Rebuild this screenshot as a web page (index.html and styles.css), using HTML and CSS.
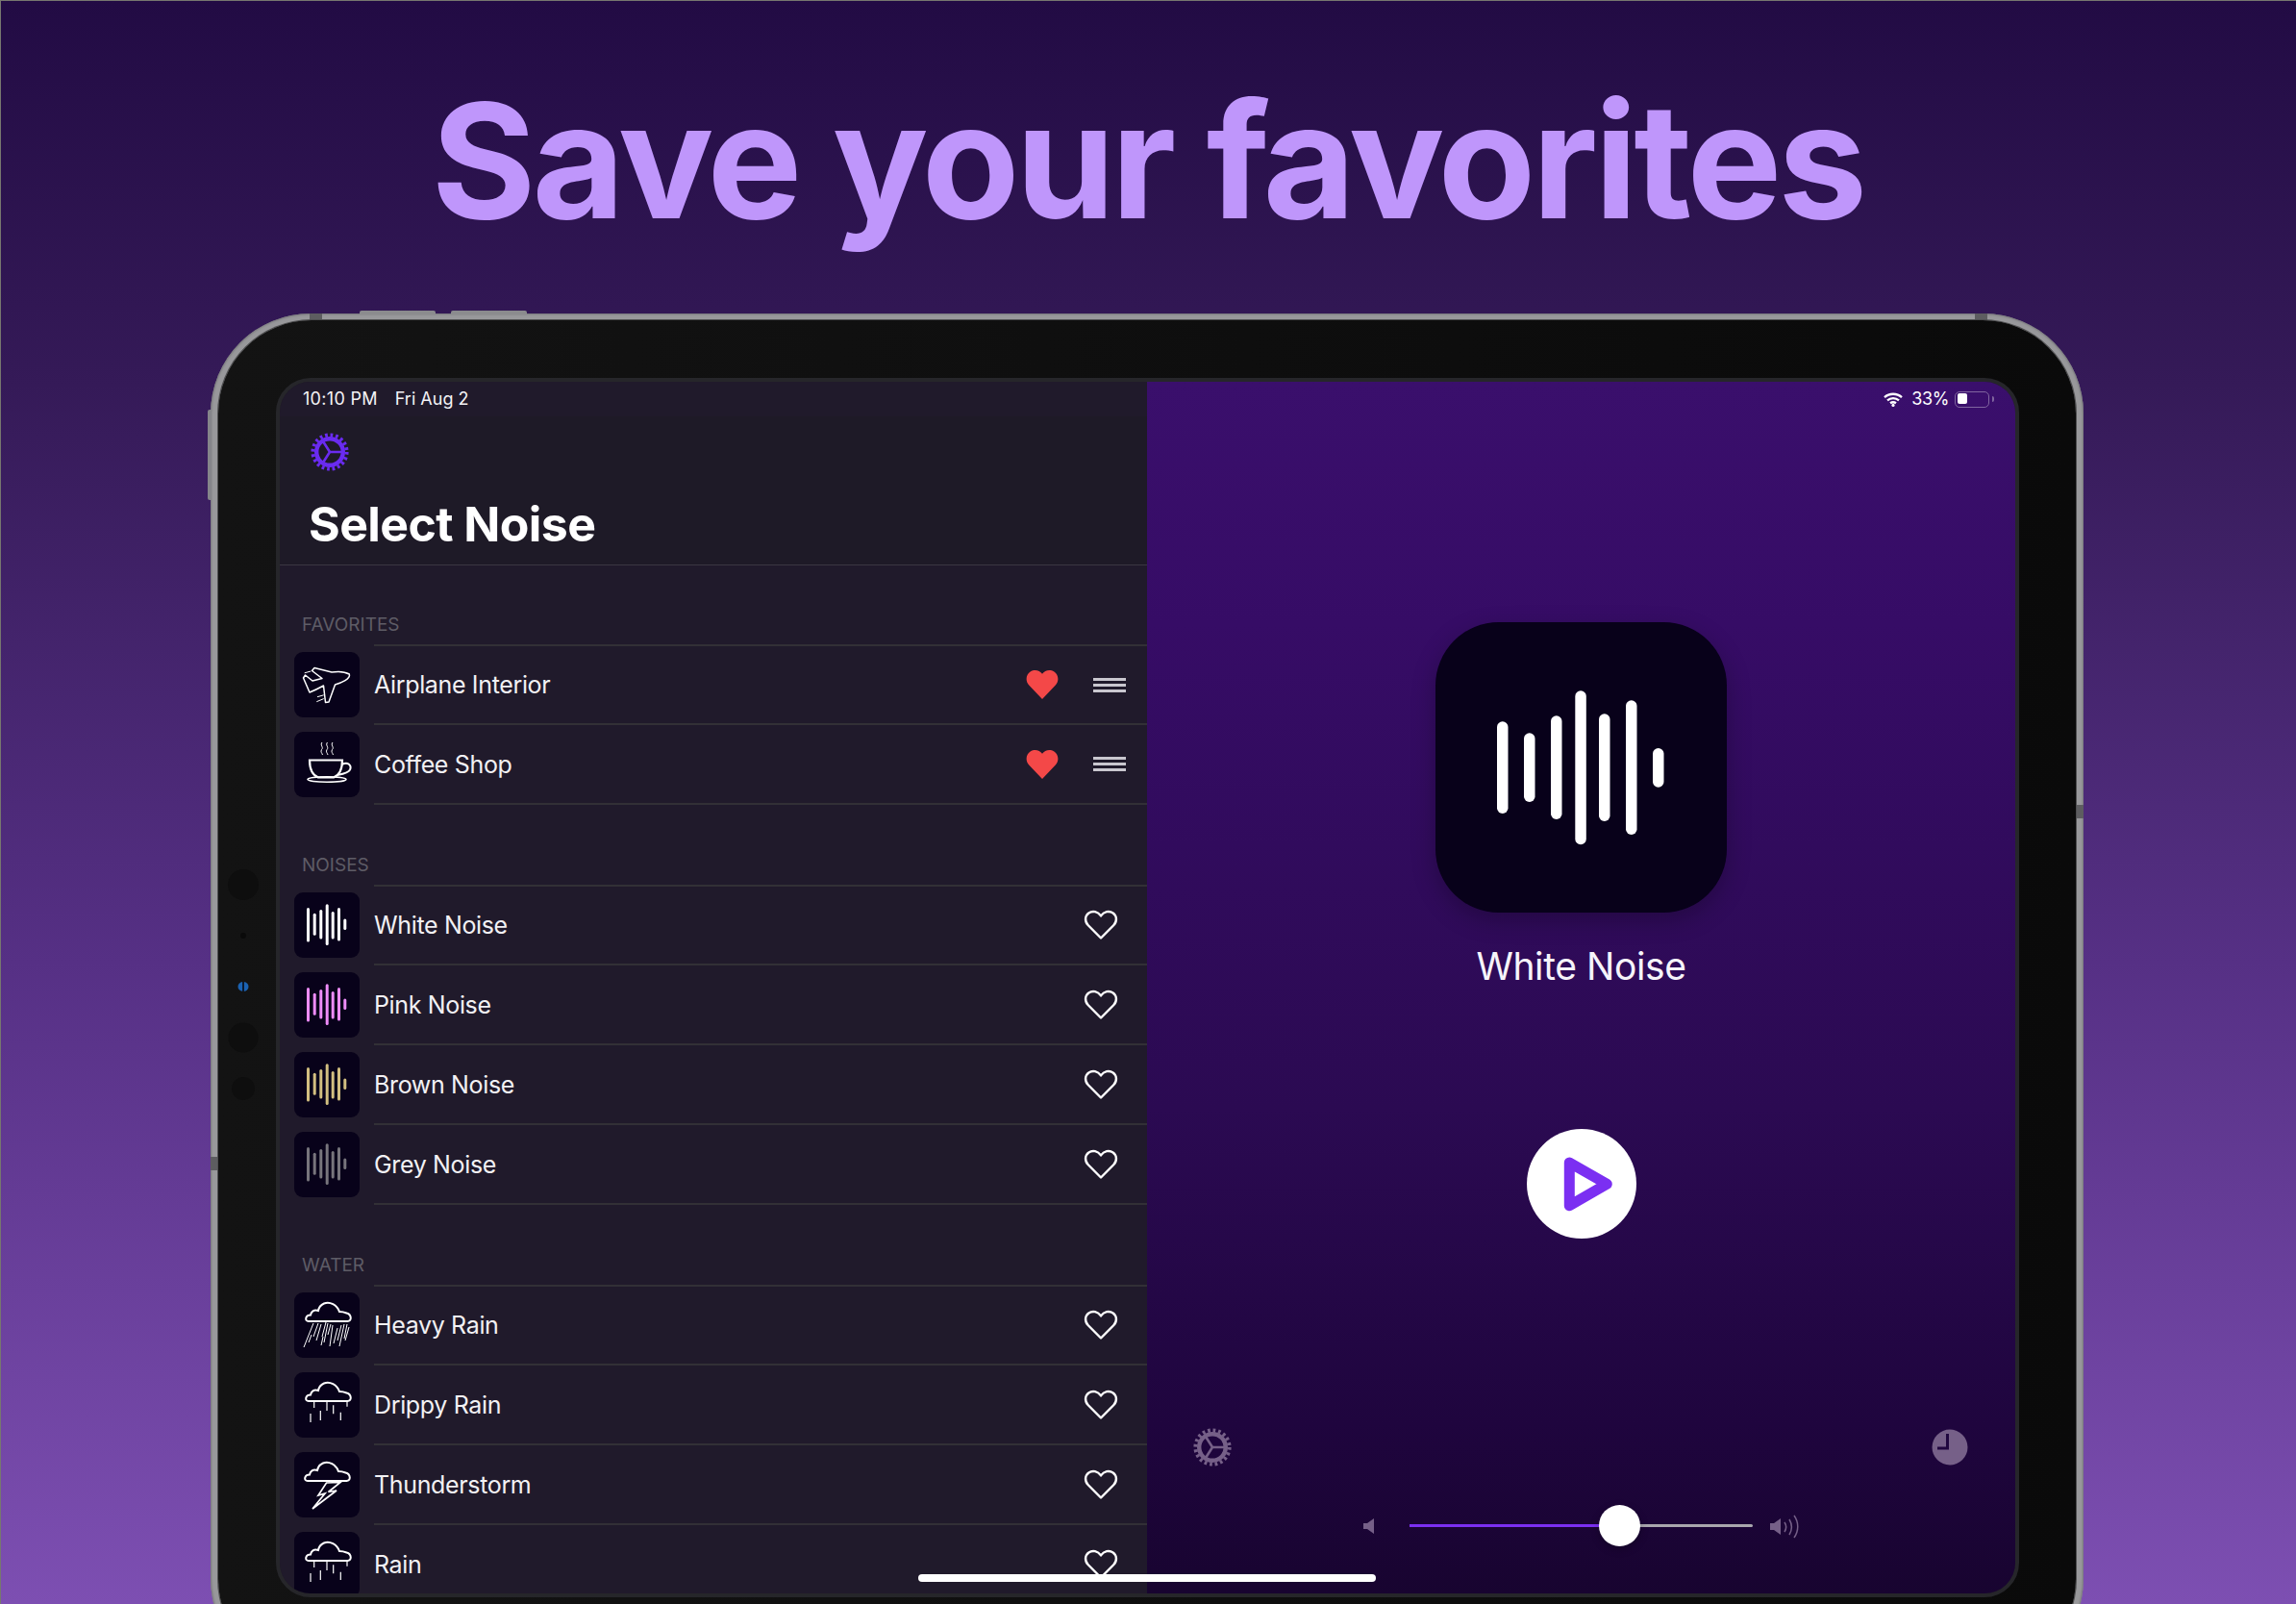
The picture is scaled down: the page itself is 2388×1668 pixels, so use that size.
FILE: index.html
```html
<!DOCTYPE html>
<html lang="en">
<head>
<meta charset="utf-8">
<title>Save your favorites</title>
<link rel="stylesheet" href="styles.css">
</head>
<body>
<svg class="defs" width="0" height="0" aria-hidden="true">
  <defs>
    <symbol id="gear" viewBox="0 0 40 40">
      <circle cx="20" cy="20" r="17.6" fill="none" stroke="currentColor" stroke-width="4" stroke-dasharray="2.76 2.77"/>
      <circle cx="20" cy="20" r="13.8" fill="none" stroke="currentColor" stroke-width="4.4"/>
      <path d="M20 20 L33 20 M20 20 L13 9 M20 20 L13 31" fill="none" stroke="currentColor" stroke-width="2.6"/>
    </symbol>
    <symbol id="wave" viewBox="0 0 68 68">
      <g fill="currentColor">
        <rect x="13" y="16" width="3" height="35.6" rx="1.5"/>
        <rect x="19.7" y="21.8" width="3" height="23" rx="1.5"/>
        <rect x="26.3" y="18" width="3" height="30.6" rx="1.5"/>
        <rect x="32.7" y="12.2" width="3" height="42.8" rx="1.5"/>
        <rect x="38.7" y="19.9" width="3" height="28.7" rx="1.5"/>
        <rect x="45" y="16" width="3" height="34.5" rx="1.5"/>
        <rect x="51.3" y="27.5" width="3" height="11.5" rx="1.5"/>
      </g>
    </symbol>
    <symbol id="cloud" viewBox="0 0 68 68">
      <path d="M15 30 H55.5 C60 30 60 23 54.5 21.5 C52 20.5 49.5 20 47 20 C44.5 13 37 9 31 11.5 C27.5 13 25.5 16 25 19 C20.5 17.5 17.5 20 17 23.5 C11.5 23.5 10.5 30 15 30 Z" fill="none" stroke="#fff" stroke-width="2"/>
    </symbol>
    <symbol id="drips" viewBox="0 0 68 68">
      <use href="#cloud" width="68" height="68"/>
      <path d="M20.7 31V37M34 31V40M40.7 34.3V43.3M55 31V35.7M17 43V52M27.3 40V50M48.3 41.7V50" fill="none" stroke="#fff" stroke-width="1.2"/>
    </symbol>
    <symbol id="heart" viewBox="0 0 36 32">
      <path d="M18 29.5 L4.6 16 C0.8 12 1.4 6.2 5.4 3.4 C9.4 0.8 14.8 1.8 18 6.4 C21.2 1.8 26.6 0.8 30.6 3.4 C34.6 6.2 35.2 12 31.4 16 Z"/>
    </symbol>
    <symbol id="heart-solid" viewBox="0 0 34 32">
      <path d="M17 31 L3.2 16.6 C-0.8 12.2 0 5.4 4.6 2.4 C8.8 -0.2 14.2 0.6 17 4.8 C19.8 0.6 25.2 -0.2 29.4 2.4 C34 5.4 34.8 12.2 30.8 16.6 Z"/>
    </symbol>
  </defs>
</svg>

<h1 class="headline">Save your favorites</h1>

<div class="device">
  <span class="top-btn top-btn-a"></span>
  <span class="top-btn top-btn-b"></span>
  <span class="side-btn"></span>
  <span class="band band-l"></span>
  <span class="band band-r"></span>
  <span class="band-side band-side-r"></span>
  <span class="band-side band-side-l"></span>
  <div class="bezel">
    <div class="cameras">
      <span class="cam cam-lg"></span>
      <span class="cam cam-dot"></span>
      <span class="cam cam-blue"></span>
      <span class="cam cam-lg2"></span>
      <span class="cam cam-md"></span>
    </div>
    <div class="screen">
      <section class="sidebar">
        <div class="status status-left"><span>10:10 PM</span><span class="status-date">Fri Aug 2</span></div>
        <header class="side-head">
          <svg class="gear gear-nav"><use href="#gear"/></svg>
          <h2 class="side-title">Select Noise</h2>
        </header>

        <div class="section-label section-first">FAVORITES</div>
        <ul class="rows">
          <li class="row">
            <div class="thumb">
              <svg viewBox="0 0 68 68" class="thumb-svg">
                <path d="M57.3 23 C52 20 45 20 39 21 L21 16.5 L18.5 19.5 L29 27.5 L19 30 L11.5 24 L9.5 27 L16 42 C21 40 26 37.5 30.5 35 L32.5 52.5 L36 52 L42.5 34 C49 32 59 28 57.3 23 Z" fill="none" stroke="#fff" stroke-width="1.5" stroke-linejoin="round"/>
                <path d="M10.7 21.8L17.3 20M23.3 51.7L30.7 48.6M24 46.7L30.7 44.8" fill="none" stroke="#fff" stroke-width="1"/>
              </svg>
            </div>
            <div class="row-body"><span class="row-name">Airplane Interior</span>
              <svg class="heart-fill"><use href="#heart-solid"/></svg>
              <span class="handle"><i></i><i></i><i></i></span>
            </div>
          </li>
          <li class="row">
            <div class="thumb">
              <svg viewBox="0 0 68 68" class="thumb-svg">
                <path d="M16 29.5 H50 C50 38 47 45 41 47.5 H25 C19 45 16 38 16 29.5 Z" fill="none" stroke="#fff" stroke-width="2.2"/>
                <path d="M49.5 34 C56 30.5 60 35 58 39.5 C56 43 50 44 45 45" fill="none" stroke="#fff" stroke-width="2"/>
                <ellipse cx="34" cy="49.5" rx="20" ry="2.8" fill="none" stroke="#fff" stroke-width="1.6"/>
                <path d="M29 11 C26.5 14 31 16 28.5 18.5 C27 21 29 22 29.5 24 M34.5 11 C32 14 36.5 16 34 18.5 C32.5 21 34.5 22 35 24 M40 11 C37.5 14 42 16 39.5 18.5 C38 21 40 22 40.5 24" fill="none" stroke="#fff" stroke-width="1"/>
              </svg>
            </div>
            <div class="row-body"><span class="row-name">Coffee Shop</span>
              <svg class="heart-fill"><use href="#heart-solid"/></svg>
              <span class="handle"><i></i><i></i><i></i></span>
            </div>
          </li>
        </ul>

        <div class="section-label">NOISES</div>
        <ul class="rows">
          <li class="row"><div class="thumb"><svg class="thumb-svg wave-white"><use href="#wave"/></svg></div>
            <div class="row-body"><span class="row-name">White Noise</span><svg class="heart-line"><use href="#heart"/></svg></div></li>
          <li class="row"><div class="thumb"><svg class="thumb-svg wave-pink"><use href="#wave"/></svg></div>
            <div class="row-body"><span class="row-name">Pink Noise</span><svg class="heart-line"><use href="#heart"/></svg></div></li>
          <li class="row"><div class="thumb"><svg class="thumb-svg wave-brown"><use href="#wave"/></svg></div>
            <div class="row-body"><span class="row-name">Brown Noise</span><svg class="heart-line"><use href="#heart"/></svg></div></li>
          <li class="row"><div class="thumb"><svg class="thumb-svg wave-grey"><use href="#wave"/></svg></div>
            <div class="row-body"><span class="row-name">Grey Noise</span><svg class="heart-line"><use href="#heart"/></svg></div></li>
        </ul>

        <div class="section-label">WATER</div>
        <ul class="rows">
          <li class="row"><div class="thumb">
              <svg viewBox="0 0 68 68" class="thumb-svg">
                <use href="#cloud" width="68" height="68"/>
                <path d="M20 32L10 57M25 32L20 46M28 33L23 50M33 31L29 46M35 32L31 52M38 33L35 44M40 34L37 56M45 37L41 53M49 34L45 50M52 33L47 56M55 33L52 48M57 36L53 50M18 44L15 52M30 46L28 55" fill="none" stroke="#fff" stroke-width="1"/>
              </svg></div>
            <div class="row-body"><span class="row-name">Heavy Rain</span><svg class="heart-line"><use href="#heart"/></svg></div></li>
          <li class="row"><div class="thumb"><svg class="thumb-svg"><use href="#drips"/></svg></div>
            <div class="row-body"><span class="row-name">Drippy Rain</span><svg class="heart-line"><use href="#heart"/></svg></div></li>
          <li class="row"><div class="thumb">
              <svg viewBox="0 0 68 68" class="thumb-svg">
                <use href="#cloud" x="-1" width="68" height="68"/>
                <path d="M48 31.5 L33.5 32 L25 45 L32 43 L19 59 L44 40 L35.5 41.5 Z" fill="none" stroke="#fff" stroke-width="1.7"/>
              </svg></div>
            <div class="row-body"><span class="row-name">Thunderstorm</span><svg class="heart-line"><use href="#heart"/></svg></div></li>
          <li class="row"><div class="thumb"><svg class="thumb-svg"><use href="#drips"/></svg></div>
            <div class="row-body"><span class="row-name">Rain</span><svg class="heart-line"><use href="#heart"/></svg></div></li>
        </ul>
      </section>

      <section class="player">
        <div class="status status-right">
          <svg class="wifi" viewBox="0 0 20 15"><path d="M1 5.2 C6 0.6 14 0.6 19 5.2 M4 8.4 C7.4 5.4 12.6 5.4 16 8.4 M7 11.3 C8.8 10 11.2 10 13 11.3" fill="none" stroke="#fff" stroke-width="2.3"/><circle cx="10" cy="13.4" r="1.6" fill="#fff"/></svg>
          <span class="percent">33%</span>
          <span class="battery"><i></i></span>
        </div>
        <div class="art">
          <svg viewBox="0 0 303 302" class="art-svg">
            <g fill="#fff">
              <rect x="64" y="103.3" width="11.5" height="95.7" rx="5.75"/>
              <rect x="92" y="115.3" width="11.5" height="71.7" rx="5.75"/>
              <rect x="120" y="97.3" width="11.5" height="107.7" rx="5.75"/>
              <rect x="145.3" y="71.3" width="11.5" height="160" rx="5.75"/>
              <rect x="170" y="95.3" width="11.5" height="111.7" rx="5.75"/>
              <rect x="198" y="81.3" width="11.5" height="139.7" rx="5.75"/>
              <rect x="226" y="131" width="11.5" height="40.7" rx="5.75"/>
            </g>
          </svg>
        </div>
        <div class="track-title">White Noise</div>
        <button class="play" type="button" aria-label="Play">
          <svg viewBox="0 0 114 114" class="play-svg"><path d="M44.3 35 L83.3 57.3 L44.3 79.7 Z" fill="none" stroke="#7b2ff2" stroke-width="11" stroke-linejoin="round"/></svg>
        </button>
        <div class="tools">
          <svg class="gear gear-tool"><use href="#gear"/></svg>
          <svg class="clock" viewBox="0 0 38 38"><circle cx="19" cy="19" r="18.5" fill="#766088"/><path d="M16.5 5 V20 H6" fill="none" stroke="#20073f" stroke-width="3"/></svg>
        </div>
        <div class="volume">
          <svg class="vol-low" viewBox="0 0 11 16"><path d="M0 5 H4 L11 0 V16 L4 11 H0 Z" fill="#766088"/></svg>
          <div class="slider"><span class="slider-fill"></span><span class="slider-thumb"></span></div>
          <svg class="vol-high" viewBox="0 0 31 25"><path d="M0 9 H4 L11 4 V21 L4 16 H0 Z" fill="#766088"/><path d="M15 8 C17 11 17 15 15 18 M20 5 C23 10 23 16 20 21 M25 1 C30 8 30 17 25 24" fill="none" stroke="#766088" stroke-width="1.5"/></svg>
        </div>
      </section>
      <div class="home-bar"></div>
    </div>
  </div>
</div>
</body>
</html>
```

FILE: styles.css
```css
* { box-sizing: border-box; }
html, body { margin: 0; padding: 0; }
html { height: 1668px; overflow: hidden; }
body {
  width: 2388px;
  height: 1668px;
  overflow: hidden;
  font-family: Inter, "Liberation Sans", sans-serif;
  background: linear-gradient(180deg, #220b44 0%, #351a58 24%, #563085 60%, #7d4fb2 100%);
  border-top: 1px solid #77776f;
  border-left: 1px solid #77776f;
}
.defs { position: absolute; }
ul { list-style: none; margin: 0; padding: 0; }

.headline {
  margin: 0;
  height: 325px;
  padding: 71px 2px 0 0;
  text-align: center;
  font-size: 166px;
  line-height: 190px;
  font-weight: 700;
  letter-spacing: -4px;
  color: #bf96fb;
}

.device {
  position: relative;
  margin-left: 218px;
  width: 1948px;
  height: 1420px;
  border-radius: 104px;
  padding: 7px 8px;
  background: #98989b;
  box-shadow: inset 0 0 2px 1px #77777a;
}
.top-btn { position: absolute; top: -3px; height: 4px; width: 79px; background: #8b8b8e; border-radius: 2px 2px 0 0; }
.top-btn-a { left: 155px; }
.top-btn-b { left: 250px; }
.side-btn { position: absolute; left: -3px; top: 100px; width: 4px; height: 94px; background: #85858a; border-radius: 2px 0 0 2px; }
.band { position: absolute; top: 0; width: 13px; height: 7px; background: #5d5d60; }
.band-l { left: 103px; }
.band-r { right: 100px; }
.band-side { position: absolute; width: 8px; height: 14px; background: #5d5d60; }
.band-side-r { right: 0; top: 511px; }
.band-side-l { left: 0; top: 877px; }

.bezel {
  position: relative;
  height: 100%;
  padding: 60px 60px 0 60px;
  border-radius: 97px;
  background: linear-gradient(90deg, #131313, #0a0a0a);
  box-shadow: 0 0 0 1px #4e4e50;
}
.cameras { position: absolute; left: 26px; top: 587px; width: 0; }
.cam { position: absolute; border-radius: 50%; background: #0e0e0e; transform: translate(-50%, -50%); }
.cam-lg { top: 0; width: 32px; height: 32px; }
.cam-dot { top: 53px; width: 6px; height: 6px; background: #0a0a0a; }
.cam-blue { top: 106px; width: 11px; height: 10px; background: linear-gradient(90deg, #1b62b2 42%, #0a1a30 42% 58%, #1b62b2 58%); }
.cam-lg2 { top: 159px; width: 31px; height: 31px; }
.cam-md { top: 212px; width: 24px; height: 24px; }

.screen {
  position: relative;
  display: grid;
  grid-template-columns: 902px 903px;
  width: 1813px;
  height: 1268px;
  border: 4px solid #26262a;
  border-radius: 36px;
  overflow: hidden;
  background: #1e1a27;
}

.status { display: flex; align-items: center; height: 36px; font-size: 18px; line-height: 36px; letter-spacing: 0.3px; color: #f4f3f6; }
.status-left { gap: 18px; padding-left: 24px; }
.status-date { letter-spacing: 0; }
.status-right { justify-content: flex-end; padding-right: 27px; color: #fff; letter-spacing: 0; }

.sidebar { height: 1260px; overflow: hidden; background: #201a2b; }
.side-head {
  height: 155px;
  padding-top: 17px;
  background: #1e1a27;
  border-bottom: 1px solid #3a3742;
}
.gear { display: block; }
.gear-nav { width: 40px; height: 40px; margin-left: 32px; color: #6a2bf0; }
.side-title {
  margin: 25px 0 0 30px;
  font-size: 50px;
  line-height: 60px;
  font-weight: 700;
  letter-spacing: -0.6px;
  color: #fff;
}

.section-label {
  height: 84px;
  padding: 51px 0 0 23px;
  font-size: 19px;
  line-height: 24px;
  color: #5e5c66;
}
.section-first { height: 83px; padding-top: 50px; }
.row { display: flex; height: 83px; padding-left: 15px; }
.row:first-child .row-body { border-top: 2px solid #323036; height: 84px; margin-top: -1px; }
.thumb {
  flex: none;
  width: 68px;
  height: 68px;
  margin-top: 7px;
  border-radius: 9px;
  background: #08021a;
}
.thumb-svg { display: block; width: 68px; height: 68px; }
.wave-white { color: #fff; }
.wave-pink { color: #ee8cf8; }
.wave-brown { color: #d2bf80; }
.wave-grey { color: #77757c; }
.row-body {
  flex: 1;
  display: flex;
  align-items: center;
  margin-left: 15px;
  height: 83px;
  border-bottom: 2px solid #323036;
}
.row-name { flex: 1; font-size: 25px; line-height: 32px; letter-spacing: -0.35px; color: #f2f1f4; }
.heart-fill { width: 34px; height: 32px; margin-right: 36px; fill: #f44848; }
.heart-line { width: 36px; height: 32px; margin-right: 30px; fill: none; stroke: #fff; stroke-width: 2.4; stroke-linejoin: round; }
.handle { display: flex; flex-direction: column; gap: 3px; width: 34px; margin-right: 22px; }
.handle i { display: block; height: 3px; background: #c9c7cf; }

.player {
  height: 1260px;
  display: flex;
  flex-direction: column;
  align-items: center;
  background: linear-gradient(180deg, #3a0f6c 0%, #360c66 20%, #2b0a52 60%, #1f053e 86%, #180430 100%);
}
.player .status { align-self: stretch; }
.wifi { width: 20px; height: 15px; margin-right: 9px; }
.percent { letter-spacing: -0.4px; margin-right: 6px; }
.battery {
  position: relative;
  width: 36px;
  height: 17px;
  padding: 1.5px 2px;
  border: 1.5px solid #80659f;
  border-radius: 5px;
}
.battery i { display: block; width: 10px; height: 11px; border-radius: 2px; background: #fff; }
.battery::after {
  content: "";
  position: absolute;
  right: -6px;
  top: 4px;
  width: 2px;
  height: 6px;
  border-radius: 0 2px 2px 0;
  background: #80659f;
}
.art {
  margin-top: 214px;
  width: 303px;
  height: 302px;
  border-radius: 66px;
  background: #08011a;
  box-shadow: 0 8px 24px rgba(0, 0, 0, 0.25);
}
.art-svg { display: block; width: 303px; height: 302px; }
.track-title { margin-top: 30px; font-size: 39px; line-height: 52px; letter-spacing: -0.4px; color: #f6f4fa; }
.play {
  margin-top: 143px;
  width: 114px;
  height: 114px;
  padding: 0;
  border: 0;
  border-radius: 50%;
  background: #fff;
}
.play-svg { display: block; width: 114px; height: 114px; }
.tools {
  align-self: stretch;
  display: flex;
  align-items: center;
  justify-content: space-between;
  margin-top: 197px;
  padding: 0 49px 0 48px;
}
.gear-tool { width: 40px; height: 40px; color: #766088; }
.clock { width: 38px; height: 38px; }
.volume { display: flex; align-items: center; margin-top: 40px; height: 42px; }
.vol-low { width: 11px; height: 16px; margin-right: 37px; margin-top: 2px; }
.vol-high { width: 31px; height: 25px; margin-left: 18px; margin-top: 2px; }
.slider { position: relative; width: 357px; height: 3px; background: #a9a6ad; border-radius: 2px; }
.slider-fill { position: absolute; left: 0; top: 0; width: 218px; height: 3px; background: #7b2ff2; }
.slider-thumb {
  position: absolute;
  left: 197px;
  top: -20px;
  width: 43px;
  height: 43px;
  border-radius: 50%;
  background: #fff;
  box-shadow: 0 3px 8px rgba(0, 0, 0, 0.25);
}
.home-bar {
  position: absolute;
  left: 664px;
  bottom: 12px;
  width: 476px;
  height: 8px;
  border-radius: 4px;
  background: #fff;
}
```
